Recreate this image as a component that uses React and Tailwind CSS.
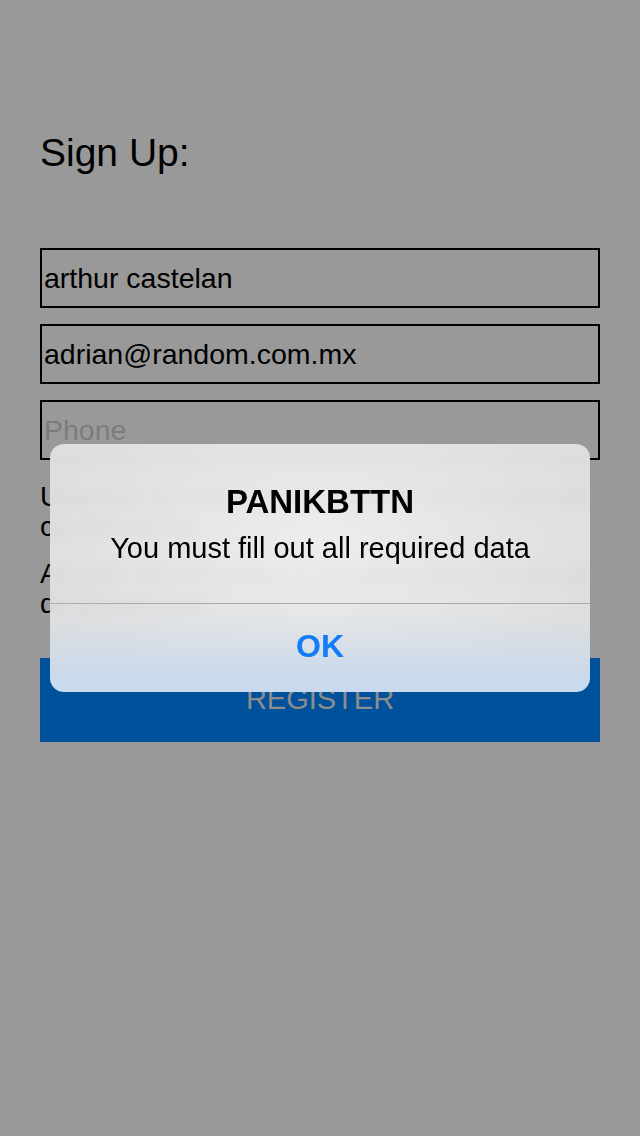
import React from "react";

export default function App() {
  const font = { fontFamily: '"Liberation Sans", Arial, sans-serif' };
  return (
    <div className="relative w-[640px] h-[1136px] bg-[#999999] overflow-hidden" style={font}>
      <div className="px-10 pt-[128px]">
        <h1 className="text-[39px] leading-[50px] text-black">Sign Up:</h1>
        <div className="mt-[70px] flex flex-col gap-[16px]">
          <div className="h-[60px] border-2 border-black flex items-center px-[2px] text-[28.5px] text-black">arthur castelan</div>
          <div className="h-[60px] border-2 border-black flex items-center px-[2px] text-[28.5px] text-black">adrian@random.com.mx</div>
          <div className="h-[60px] border-2 border-black flex items-center px-[2px] text-[28.5px] text-[#7c7c7c]">Phone</div>
        </div>
        <p className="mt-[22px] text-[28px] leading-[30px] text-black">Usamos tu email para enviarte un código de confirmación</p>
        <p className="mt-[17px] text-[28px] leading-[30px] text-black">Acepto los términos y condiciones y el aviso de privacidad.</p>
        <div className="mt-[39px] h-[84px] bg-[#00519c] flex items-center justify-center text-[29px] text-[#8d8d8d] uppercase">Register</div>
      </div>

      <div className="absolute left-[50px] top-[444px] w-[540px] h-[248px] rounded-[14px] overflow-hidden backdrop-blur-[4px] bg-[linear-gradient(to_bottom,rgba(198,216,237,0)_68%,rgba(200,218,238,0.97)_100%),radial-gradient(ellipse_at_50%_40%,rgba(240,241,241,0.95),rgba(226,226,226,0.95)_75%)] flex flex-col">
        <div className="h-[159px] flex flex-col items-center pt-[38px]">
          <div className="text-[33px] leading-[40px] font-bold text-black">PANIKBTTN</div>
          <div className="mt-[10px] text-[29px] leading-[32px] text-black">You must fill out all required data</div>
        </div>
        <div className="h-px bg-[#ababab]" />
        <div className="flex-1 flex items-center justify-center text-[32px] font-bold text-[#147cf6] pb-[4px]">OK</div>
      </div>
    </div>
  );
}
